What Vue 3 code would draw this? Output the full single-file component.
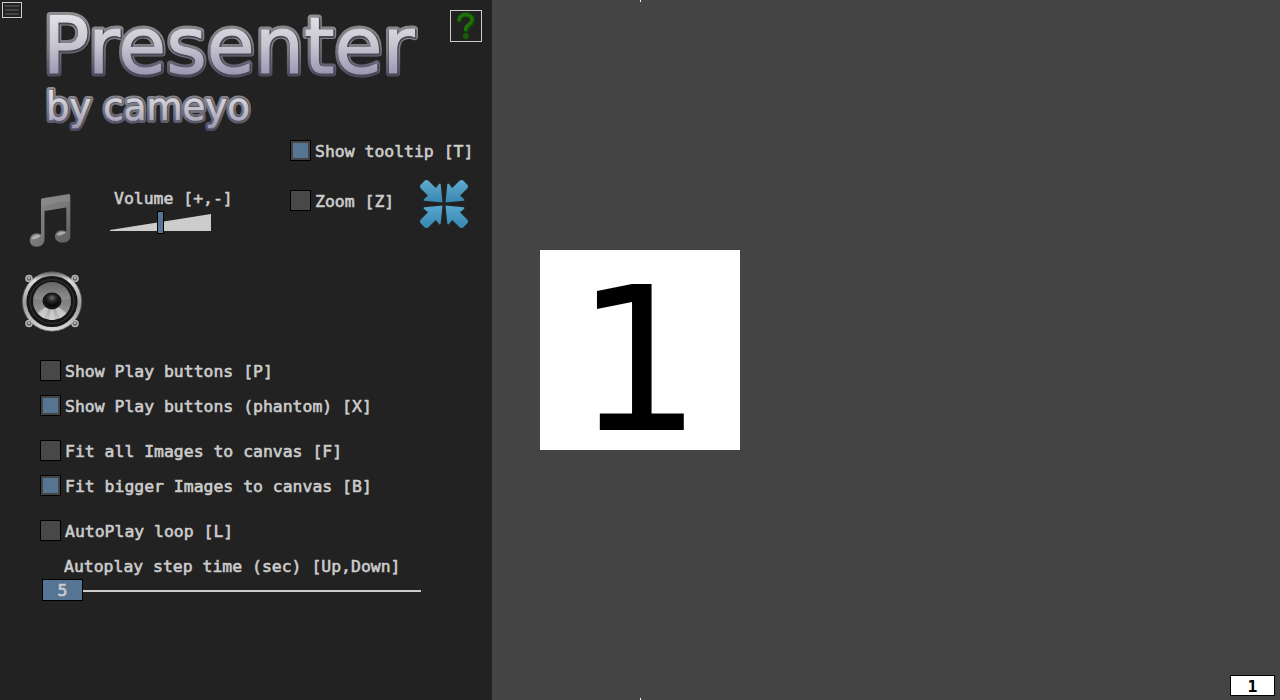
<script setup>
import { ref } from 'vue'

const view = ref([
  { id: 'tooltip', label: 'Show tooltip [T]', on: true },
  { id: 'zoom', label: 'Zoom [Z]', on: false },
])
const groups = ref([
  [
    { id: 'play', label: 'Show Play buttons [P]', on: false },
    { id: 'phantom', label: 'Show Play buttons (phantom) [X]', on: true },
  ],
  [
    { id: 'fit', label: 'Fit all Images to canvas [F]', on: false },
    { id: 'fitbig', label: 'Fit bigger Images to canvas [B]', on: true },
  ],
  [{ id: 'loop', label: 'AutoPlay loop [L]', on: false }],
])
const step = ref(5)
const page = ref(1)
const arrows = [[1, 1], [-1, 1], [1, -1], [-1, -1]]
const screws = [[8, 8.5], [54, 8.5], [8, 53.5], [54, 53.5]]
</script>

<template>
  <main class="stage">
    <span class="tick top"></span>
    <span class="tick bottom"></span>
    <div class="slide">{{ page }}</div>
    <div class="page">{{ page }}</div>

    <aside class="panel">
      <header class="head">
        <button class="menu"><i></i><i></i><i></i></button>
        <svg class="logo" width="384" height="134" viewBox="40 0 384 134">
          <defs>
            <linearGradient id="rimA" gradientUnits="userSpaceOnUse" x1="0" y1="12" x2="0" y2="78">
              <stop offset="0" stop-color="#8e8e92" /><stop offset=".55" stop-color="#7b7a83" /><stop offset="1" stop-color="#4c4962" />
            </linearGradient>
            <linearGradient id="faceA" gradientUnits="userSpaceOnUse" x1="0" y1="14" x2="0" y2="75">
              <stop offset="0" stop-color="#e2e2e7" /><stop offset=".5" stop-color="#c8c7d1" /><stop offset="1" stop-color="#9b96b2" />
            </linearGradient>
            <linearGradient id="rimB" gradientUnits="userSpaceOnUse" x1="0" y1="88" x2="0" y2="130">
              <stop offset="0" stop-color="#8e8e92" /><stop offset=".5" stop-color="#777680" /><stop offset="1" stop-color="#4c4962" />
            </linearGradient>
            <linearGradient id="faceB" gradientUnits="userSpaceOnUse" x1="0" y1="90" x2="0" y2="128">
              <stop offset="0" stop-color="#e0e0e6" /><stop offset=".5" stop-color="#c5c4ce" /><stop offset="1" stop-color="#9b96b2" />
            </linearGradient>
            <text id="title" class="big" x="42.500" y="73" textLength="372" lengthAdjust="spacingAndGlyphs">Presenter</text>
            <text id="author" class="small" x="46" y="119.500" textLength="204" lengthAdjust="spacingAndGlyphs">by cameyo</text>
          </defs>
          <use href="#title" fill="url(#rimA)" stroke="url(#rimA)" stroke-width="7.200" />
          <use href="#title" x=".6" y=".7" fill="#484752" stroke="#484752" stroke-width="2.800" />
          <use href="#title" fill="url(#faceA)" stroke="url(#faceA)" stroke-width="1.200" />
          <use href="#author" fill="url(#rimB)" stroke="url(#rimB)" stroke-width="6.200" />
          <use href="#author" x=".5" y=".5" fill="#53525d" stroke="#53525d" stroke-width="1.800" />
          <use href="#author" fill="url(#faceB)" stroke="url(#faceB)" stroke-width=".7" />
        </svg>
        <button class="help">
          <svg width="30" height="30" viewBox="0 0 30 30" fill="none">
            <path d="M8.200 9C8.800 1.600 21.800 1.800 21.500 9.400C21.300 14.600 15 14 15 19" stroke="#124a08" stroke-width="5" stroke-linecap="round" />
            <path d="M8.200 8.500C9.200 2 21.200 2 20.900 8.800C20.600 13.600 14.600 13.600 14.600 18.500" stroke="#1d7307" stroke-width="3.400" stroke-linecap="round" />
            <circle cx="14.800" cy="25" r="3" fill="#185d08" />
          </svg>
        </button>
      </header>

      <section class="upper">
        <div class="audio">
          <svg class="note" width="46" height="60" viewBox="0 0 46 60">
            <defs><linearGradient id="ng" x1="0" y1="0" x2="1" y2="1">
              <stop offset="0" stop-color="#8b8b8b" /><stop offset=".55" stop-color="#777" /><stop offset="1" stop-color="#5c5c5c" />
            </linearGradient></defs>
            <path d="M13 7Q13 5.500 14.500 5.200L40.500 1Q42.300.8 42.300 2.500V43C42.300 48 38.500 49.500 34.500 49.500C30 49.500 27 47 27 43.500C27 38 33 35.500 38.300 38.500V14.500L16.500 18V46C16.500 51.500 12.500 53.700 8.800 53.700C4.500 53.700 1.800 51 1.800 47.500C1.800 41.500 8 38.500 13 41.500Z" fill="url(#ng)" />
            <path d="M13.500 6.500L41.700 1.700V9Q29 8 13.500 14.500Z" fill="#999" opacity=".35" />
            <path d="M3 46Q6.500 40 13 42.500Q9 47 3 46M28.500 42Q31.500 37 38 39Q34 43.500 28.500 42" fill="#c8c8c8" opacity=".7" />
          </svg>
          <div class="volume">
            <span>Volume [+,-]</span>
            <svg width="102" height="24" viewBox="0 0 102 24">
              <path d="M0 19L101 3V20H0Z" fill="#ccc" />
              <rect x="47.500" y=".5" width="6" height="22" fill="#567593" stroke="#000" />
            </svg>
          </div>
        </div>
        <div class="view">
          <label v-for="o in view" :key="o.id" class="check">
            <span class="box" :class="{ on: o.on }"></span>{{ o.label }}
          </label>
        </div>
        <svg class="shrink" width="50" height="50" viewBox="-25 -25 50 50">
          <defs>
            <linearGradient id="down" x1="0" y1="0" x2="0" y2="1">
              <stop offset="0" stop-color="#61aacf" /><stop offset="1" stop-color="#3787b0" />
            </linearGradient>
            <linearGradient id="up" x1="0" y1="1" x2="0" y2="0">
              <stop offset="0" stop-color="#56a6cf" /><stop offset="1" stop-color="#3787b0" />
            </linearGradient>
          </defs>
          <path v-for="a in arrows" :key="a.join()" :transform="`scale(${a[0]} ${a[1]})`" d="M-1.500 -1.500L-3.300 -19.800Q-4 -21.200 -5 -20L-8.200 -16L-15.800 -23.400Q-17.500 -24.800 -19.200 -23.400L-23.400 -19.200Q-24.800 -17.500 -23.400 -15.800L-16 -8.200L-20 -5Q-21.200 -4 -19.800 -3.300Z" :fill="a[1] > 0 ? 'url(#down)' : 'url(#up)'" />
        </svg>
      </section>

      <svg class="speaker" width="62" height="64" viewBox="0 0 62 64">
        <defs>
          <linearGradient id="ring" x1="0" y1="0" x2="0" y2="1">
            <stop offset="0" stop-color="#666" /><stop offset=".15" stop-color="#ddd" /><stop offset=".55" stop-color="#999" /><stop offset="1" stop-color="#ddd" />
          </linearGradient>
          <linearGradient id="cone" x1="0" y1="0" x2="0" y2="1">
            <stop offset="0" stop-color="#666" /><stop offset=".5" stop-color="#929292" /><stop offset="1" stop-color="#c4c4c4" />
          </linearGradient>
          <radialGradient id="dome" cx=".5" cy=".3" r=".6">
            <stop offset="0" stop-color="#707070" /><stop offset=".45" stop-color="#292929" /><stop offset="1" stop-color="#080808" />
          </radialGradient>
        </defs>
        <circle cx="31" cy="31.500" r="29.700" fill="url(#ring)" stroke="#555" stroke-width=".8" />
        <g v-for="s in screws" :key="s.join()">
          <circle :cx="s[0]" :cy="s[1]" r="3.800" fill="#b5b5b5" />
          <circle :cx="s[0]" :cy="s[1]" r="2.300" fill="#666" />
          <circle :cx="s[0]" :cy="s[1] - .5" r="1" fill="#ccc" />
        </g>
        <circle cx="31" cy="31.500" r="25.600" fill="#161616" />
        <circle cx="31" cy="31.500" r="22" fill="none" stroke="#2c2c2c" stroke-width="1.500" />
        <circle cx="31" cy="31" r="19" fill="url(#cone)" />
        <path d="M31 31L12 29A19 19 0 0 0 16 43ZM31 31L46 43A19 19 0 0 0 50 29Z" fill="#555" opacity=".3" />
        <path d="M31 31L17 44L23 48.500ZM31 31L28 50H34ZM31 31L39 48.500L45 44Z" fill="#ddd" opacity=".55" />
        <ellipse cx="31" cy="31" rx="9.500" ry="8.500" fill="#171717" />
        <ellipse cx="31" cy="30.500" rx="7.500" ry="6.500" fill="url(#dome)" />
      </svg>

      <section class="options">
        <div v-for="(g, i) in groups" :key="i" class="group">
          <label v-for="o in g" :key="o.id" class="check">
            <span class="box" :class="{ on: o.on }"></span>{{ o.label }}
          </label>
        </div>
      </section>

      <section class="step">
        <span class="caption">Autoplay step time (sec) [Up,Down]</span>
        <div class="slider"><b>{{ step }}</b><i></i></div>
      </section>
    </aside>
  </main>
</template>

<style>
html, body { margin: 0; background: #444; }
</style>

<style scoped>
* { box-sizing: border-box; }
.stage {
  position: relative; width: 1280px; height: 700px; overflow: hidden; background: #444;
  display: flex; align-items: center; justify-content: center;
  font: 16.44px/21px "DejaVu Sans Mono", monospace; color: #ccc;
}
.slide {
  width: 200px; height: 200px; background: #fff; color: #000; padding-right: 3px;
  font: 200px/222px "DejaVu Sans", sans-serif; text-align: center;
}
.tick { position: absolute; left: 640px; width: 1px; height: 2px; background: #fff; }
.top { top: 0; }
.bottom { bottom: 0; }
.page {
  position: absolute; right: 5px; bottom: 4px; width: 45px; height: 21px;
  border: 1px solid #000; background: #fff; color: #000;
  text-align: center; line-height: 21px; font-weight: bold;
}
.panel { position: absolute; inset: 0 auto 0 0; width: 492px; background: #222; }
.head { display: flex; align-items: flex-start; height: 134px; }
button { padding: 0; background: none; border: 1px solid #ccc; flex: none; }
.menu {
  width: 20px; height: 16px; margin: 2px 18px 0 2px;
  display: flex; flex-direction: column; align-items: center; justify-content: center; gap: 2px;
}
.menu i { width: 14px; height: 2px; background: #444; }
.help { width: 32px; height: 32px; margin: 10px 0 0 26px; display: flex; }
.logo { display: block; flex: none; }
.logo text { font-family: "DejaVu Sans", sans-serif; stroke-linejoin: round; }
.big { font-size: 79px; }
.small { font-size: 39px; }
.upper { display: flex; height: 136px; }
.audio { display: flex; width: 290px; padding: 54px 0 0 28px; }
.note { margin-top: 5px; }
.volume { display: flex; flex-direction: column; margin-left: 36px; }
.volume span { margin: 0 0 2px 4px; white-space: pre; }
.view { display: flex; flex-direction: column; gap: 29px; padding-top: 6px; width: 129px; }
.shrink { margin-top: 45px; }
.check { display: flex; gap: 4px; height: 21px; line-height: 23px; white-space: pre; }
.box { flex: none; width: 21px; height: 21px; border: 1px solid #000; background: #484848; padding: 2px; }
.box.on { background: #444; }
.box.on::before { content: ""; display: block; width: 15px; height: 15px; background: #567593; }
.speaker { display: block; margin-left: 21px; }
.options { display: flex; flex-direction: column; gap: 24px; padding: 26px 0 0 40px; }
.group { display: flex; flex-direction: column; gap: 14px; }
.step { padding: 15px 0 0 42px; }
.caption { display: block; margin-left: 22px; height: 23px; white-space: pre; }
.slider { display: flex; align-items: center; width: 379px; }
.slider b {
  width: 41px; height: 22px; border: 1px solid #000; background: #567593;
  text-align: center; font-weight: normal;
}
.slider i { flex: 1; height: 2px; margin-top: 2px; background: #ccc; }
.caption, .check, .volume span, .slider b { -webkit-text-stroke: .6px #ccc; }
</style>
